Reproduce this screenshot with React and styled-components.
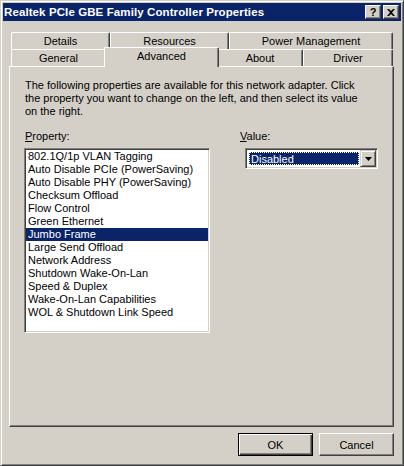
import React from "react"
import styled, { createGlobalStyle } from "styled-components"

const GlobalStyle = createGlobalStyle`
  html, body {
    margin: 0;
    padding: 0;
    background: #d4d0c8;
  }
  body {
    font-family: "Liberation Sans", Arial, sans-serif;
    font-size: 11px;
    color: #000;
  }
`

const Window = styled.div`
  box-sizing: border-box;
  width: 404px;
  height: 466px;
  padding: 2px;
  background: #d4d0c8;
  border: 1px solid;
  border-color: #d4d0c8 #404040 #404040 #d4d0c8;
  box-shadow: inset 1px 1px #fff, inset -1px -1px #808080;
  display: flex;
  flex-direction: column;
`

const TitleBar = styled.div`
  height: 18px;
  background: #0a246a;
  color: #fff;
  display: flex;
  align-items: center;
  padding-left: 1px;
  padding-right: 2px;
`

const Title = styled.div`
  flex: 1;
  font-weight: bold;
  font-size: 11.5px;
  letter-spacing: 0.1px;
`

const CaptionButton = styled.div`
  box-sizing: border-box;
  width: 16px;
  height: 14px;
  margin-left: ${p => p.$gap || 0}px;
  background: #d4d0c8;
  border: 1px solid;
  border-color: #fff #404040 #404040 #fff;
  box-shadow: inset -1px -1px #808080;
  display: flex;
  align-items: center;
  justify-content: center;
  color: #000;
  font-weight: bold;
  font-size: 11px;
  line-height: 1;
`

const Body = styled.div`
  margin: 11px 7px 0 6px;
  display: flex;
  flex-direction: column;
`

const TabRow = styled.div`
  display: flex;
  padding-left: 2px;
`

const Tab = styled.div`
  box-sizing: border-box;
  width: ${p => p.$w}px;
  height: ${p => (p.$active ? 20 : 17)}px;
  margin: ${p => (p.$active ? "-2px -2px -1px -2px" : "0")};
  padding-bottom: ${p => (p.$active ? 3 : 0)}px;
  position: relative;
  z-index: ${p => (p.$active ? 1 : 0)};
  background: #d4d0c8;
  border-top: 1px solid #fff;
  border-left: 1px solid #fff;
  border-right: 1px solid #404040;
  border-top-left-radius: 2px;
  border-top-right-radius: 2px;
  box-shadow: inset -1px 0 #808080;
  display: flex;
  align-items: center;
  justify-content: center;
`

const Panel = styled.div`
  box-sizing: border-box;
  height: 361px;
  border: 1px solid;
  border-color: #fff #404040 #404040 #fff;
  box-shadow: inset -1px -1px #808080;
  padding: 12px 14px 0 14px;
`

const Intro = styled.p`
  margin: 0 0 0 1px;
  line-height: 13px;
`

const Fields = styled.div`
  display: grid;
  grid-template-columns: 186px 1fr;
  column-gap: 30px;
  margin-top: 12px;
`

const Label = styled.div`
  line-height: 13px;
  height: 13px;
  padding-left: ${p => p.$indent || 0}px;
  margin-bottom: 5px;

  u {
    text-decoration: underline;
    text-underline-offset: 1px;
  }
`

const ListBox = styled.div`
  box-sizing: border-box;
  width: 186px;
  height: 185px;
  background: #fff;
  border: 1px solid;
  border-color: #808080 #fff #fff #808080;
  box-shadow: inset 1px 1px #404040, inset -1px -1px #d4d0c8;
  padding: 1px;
`

const ListItem = styled.div`
  height: 13px;
  line-height: 13px;
  padding-left: 2px;
  white-space: nowrap;
  background: ${p => (p.$selected ? "#0a246a" : "transparent")};
  color: ${p => (p.$selected ? "#fff" : "#000")};
`

const ValueColumn = styled.div`
  display: flex;
  flex-direction: column;
`

const Combo = styled.div`
  box-sizing: border-box;
  width: 133px;
  height: 21px;
  margin-left: 5px;
  background: #fff;
  border: 1px solid;
  border-color: #808080 #fff #fff #808080;
  box-shadow: inset 1px 1px #404040, inset -1px -1px #d4d0c8;
  padding: 2px;
  display: flex;
  align-items: stretch;
`

const ComboValue = styled.div`
  flex: 1;
  margin: 1px;
  background: #0a246a;
  color: #fff;
  outline: 1px dotted #fff;
  outline-offset: -1px;
  padding-left: 2px;
  display: flex;
  align-items: center;
`

const ComboButton = styled.div`
  box-sizing: border-box;
  width: 16px;
  margin: -1px -1px -1px 0;
  background: #d4d0c8;
  border: 1px solid;
  border-color: #d4d0c8 #404040 #404040 #d4d0c8;
  box-shadow: inset 1px 1px #fff, inset -1px -1px #808080;
  display: flex;
  align-items: center;
  justify-content: center;
`

const Footer = styled.div`
  display: flex;
  justify-content: flex-end;
  gap: 6px;
  margin-top: 6px;
`

const Button = styled.div`
  box-sizing: border-box;
  width: 75px;
  height: 23px;
  background: #d4d0c8;
  border: 1px solid;
  border-color: ${p => (p.$default ? "#000" : "#fff #404040 #404040 #fff")};
  box-shadow: ${p =>
    p.$default
      ? "inset 1px 1px #fff, inset -1px -1px #404040, inset -2px -2px #808080"
      : "inset -1px -1px #808080"};
  display: flex;
  align-items: center;
  justify-content: center;
`

const backTabs = [
  { label: "Details", w: 99 },
  { label: "Resources", w: 119 },
  { label: "Power Management", w: 164 },
]

const frontTabs = [
  { label: "General", w: 95 },
  { label: "Advanced", w: 115, active: true },
  { label: "About", w: 86 },
  { label: "Driver", w: 90 },
]

const properties = [
  "802.1Q/1p VLAN Tagging",
  "Auto Disable PCIe (PowerSaving)",
  "Auto Disable PHY (PowerSaving)",
  "Checksum Offload",
  "Flow Control",
  "Green Ethernet",
  "Jumbo Frame",
  "Large Send Offload",
  "Network Address",
  "Shutdown Wake-On-Lan",
  "Speed & Duplex",
  "Wake-On-Lan Capabilities",
  "WOL & Shutdown Link Speed",
]

const App = () => {
  return (
    <>
      <GlobalStyle />
      <Window>
        <TitleBar>
          <Title>Realtek PCIe GBE Family Controller Properties</Title>
          <CaptionButton>?</CaptionButton>
          <CaptionButton $gap={2}>
            <svg width="8" height="7" viewBox="0 0 8 7">
              <path d="M0 0h2l2 2 2-2h2L5 3.5 8 7H6L4 5 2 7H0l3-3.5z" fill="#000" />
            </svg>
          </CaptionButton>
        </TitleBar>

        <Body>
          <TabRow>
            {backTabs.map(t => (
              <Tab key={t.label} $w={t.w}>{t.label}</Tab>
            ))}
          </TabRow>
          <TabRow>
            {frontTabs.map(t => (
              <Tab key={t.label} $w={t.w} $active={t.active}>{t.label}</Tab>
            ))}
          </TabRow>

          <Panel>
            <Intro>
              The following properties are available for this network adapter. Click<br />
              the property you want to change on the left, and then select its value<br />
              on the right.
            </Intro>

            <Fields>
              <div>
                <Label $indent={1}><u>P</u>roperty:</Label>
                <ListBox>
                  {properties.map(p => (
                    <ListItem key={p} $selected={p === "Jumbo Frame"}>{p}</ListItem>
                  ))}
                </ListBox>
              </div>
              <ValueColumn>
                <Label><u>V</u>alue:</Label>
                <Combo>
                  <ComboValue>Disabled</ComboValue>
                  <ComboButton>
                    <svg width="7" height="4" viewBox="0 0 7 4">
                      <path d="M0 0h7L3.5 4z" fill="#000" />
                    </svg>
                  </ComboButton>
                </Combo>
              </ValueColumn>
            </Fields>
          </Panel>

          <Footer>
            <Button $default>OK</Button>
            <Button>Cancel</Button>
          </Footer>
        </Body>
      </Window>
    </>
  )
}

export default App
